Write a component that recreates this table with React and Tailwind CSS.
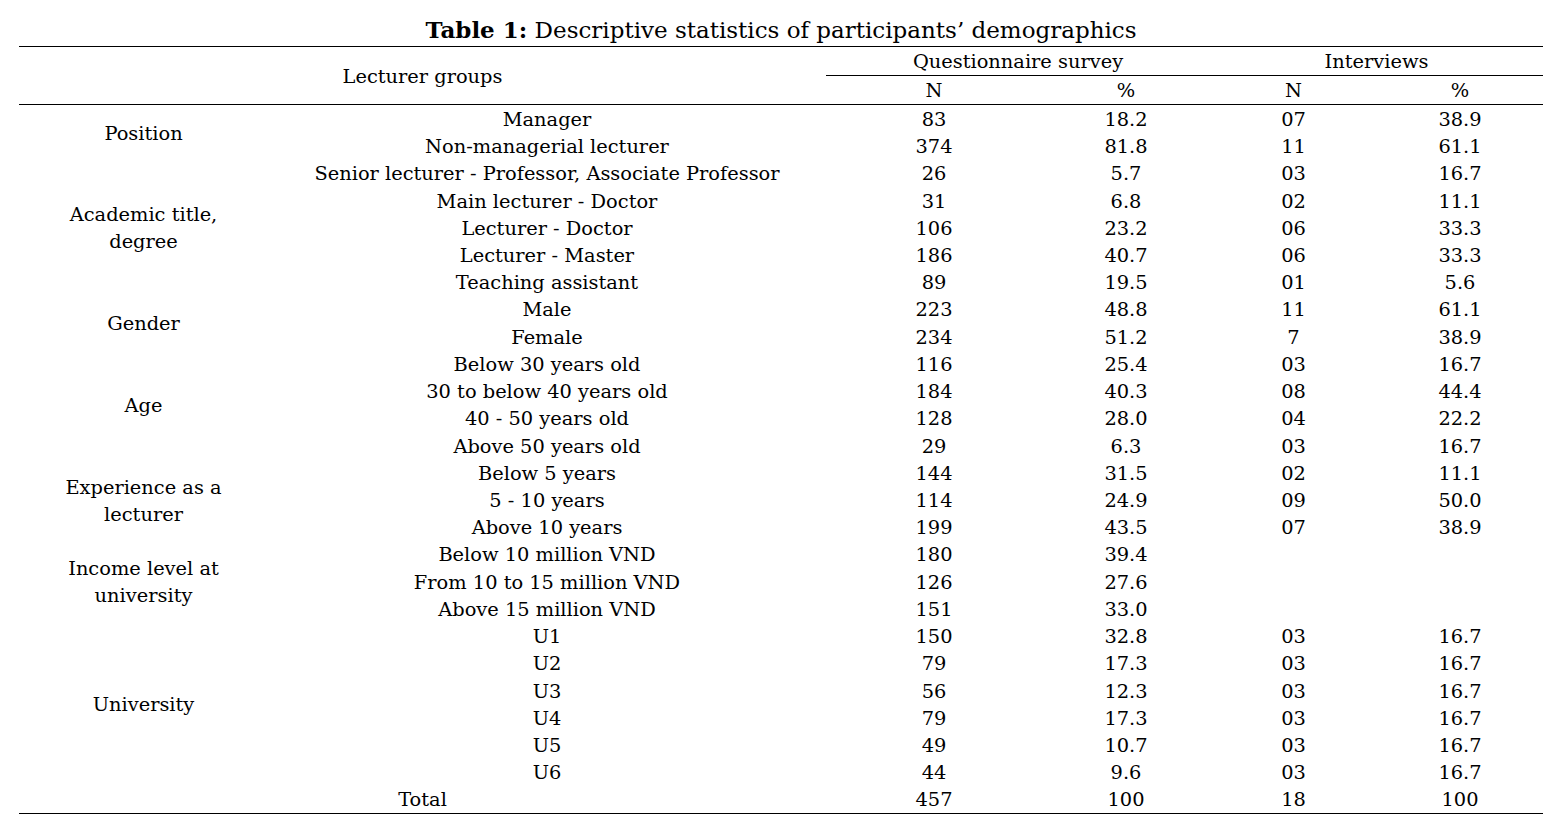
import React from "react";

const sections = [
  {
    label: ["Position"],
    rows: [
      ["Manager", "83", "18.2", "07", "38.9"],
      ["Non-managerial lecturer", "374", "81.8", "11", "61.1"],
    ],
  },
  {
    label: ["Academic title,", "degree"],
    rows: [
      ["Senior lecturer - Professor, Associate Professor", "26", "5.7", "03", "16.7"],
      ["Main lecturer - Doctor", "31", "6.8", "02", "11.1"],
      ["Lecturer - Doctor", "106", "23.2", "06", "33.3"],
      ["Lecturer - Master", "186", "40.7", "06", "33.3"],
      ["Teaching assistant", "89", "19.5", "01", "5.6"],
    ],
  },
  {
    label: ["Gender"],
    rows: [
      ["Male", "223", "48.8", "11", "61.1"],
      ["Female", "234", "51.2", "7", "38.9"],
    ],
  },
  {
    label: ["Age"],
    rows: [
      ["Below 30 years old", "116", "25.4", "03", "16.7"],
      ["30 to below 40 years old", "184", "40.3", "08", "44.4"],
      ["40 - 50 years old", "128", "28.0", "04", "22.2"],
      ["Above 50 years old", "29", "6.3", "03", "16.7"],
    ],
  },
  {
    label: ["Experience as a", "lecturer"],
    rows: [
      ["Below 5 years", "144", "31.5", "02", "11.1"],
      ["5 - 10 years", "114", "24.9", "09", "50.0"],
      ["Above 10 years", "199", "43.5", "07", "38.9"],
    ],
  },
  {
    label: ["Income level at", "university"],
    rows: [
      ["Below 10 million VND", "180", "39.4", "", ""],
      ["From 10 to 15 million VND", "126", "27.6", "", ""],
      ["Above 15 million VND", "151", "33.0", "", ""],
    ],
  },
  {
    label: ["University"],
    rows: [
      ["U1", "150", "32.8", "03", "16.7"],
      ["U2", "79", "17.3", "03", "16.7"],
      ["U3", "56", "12.3", "03", "16.7"],
      ["U4", "79", "17.3", "03", "16.7"],
      ["U5", "49", "10.7", "03", "16.7"],
      ["U6", "44", "9.6", "03", "16.7"],
    ],
  },
];

const spanClass = {
  2: "row-span-2",
  3: "row-span-3",
  4: "row-span-4",
  5: "row-span-5",
  6: "row-span-6",
};

const cell = "flex items-center justify-center whitespace-nowrap pt-[2px]";

export default function App() {
  return (
    <div className="min-h-screen bg-white text-black font-['DejaVu_Serif',serif] text-[19.4px]">
      <div className="ml-[19px] w-[1524px]">
        {/* Caption */}
        <div className="h-[46px] pt-[15px] text-center text-[23px] leading-[30px]">
          <span className="font-bold">Table 1:</span> Descriptive statistics of participants’ demographics
        </div>

        <div className="grid grid-cols-[249px_558px_216px_168px_167px_166px] grid-rows-[29px_29px_repeat(26,27.23px)] border-t border-b border-black leading-none">
          {/* Header */}
          <div className={`${cell} col-span-2 row-span-2 border-b border-black`}>Lecturer groups</div>
          <div className={`${cell} col-span-2 border-b border-black`}>Questionnaire survey</div>
          <div className={`${cell} col-span-2 border-b border-black`}>Interviews</div>
          <div className={`${cell} border-b border-black`}>N</div>
          <div className={`${cell} border-b border-black`}>%</div>
          <div className={`${cell} border-b border-black`}>N</div>
          <div className={`${cell} border-b border-black`}>%</div>

          {/* Body */}
          {sections.map((section, i) => (
            <React.Fragment key={i}>
              <div className={`${spanClass[section.rows.length]} flex flex-col items-center justify-center pt-[2px] text-center leading-[27px]`}>
                {section.label.map((line, j) => (
                  <span key={j}>{line}</span>
                ))}
              </div>
              {section.rows.map((row, r) =>
                row.map((value, c) => (
                  <div key={`${r}-${c}`} className={cell}>
                    {value}
                  </div>
                ))
              )}
            </React.Fragment>
          ))}

          {/* Total */}
          <div className={`${cell} col-span-2`}>Total</div>
          <div className={cell}>457</div>
          <div className={cell}>100</div>
          <div className={cell}>18</div>
          <div className={cell}>100</div>
        </div>
      </div>
    </div>
  );
}
